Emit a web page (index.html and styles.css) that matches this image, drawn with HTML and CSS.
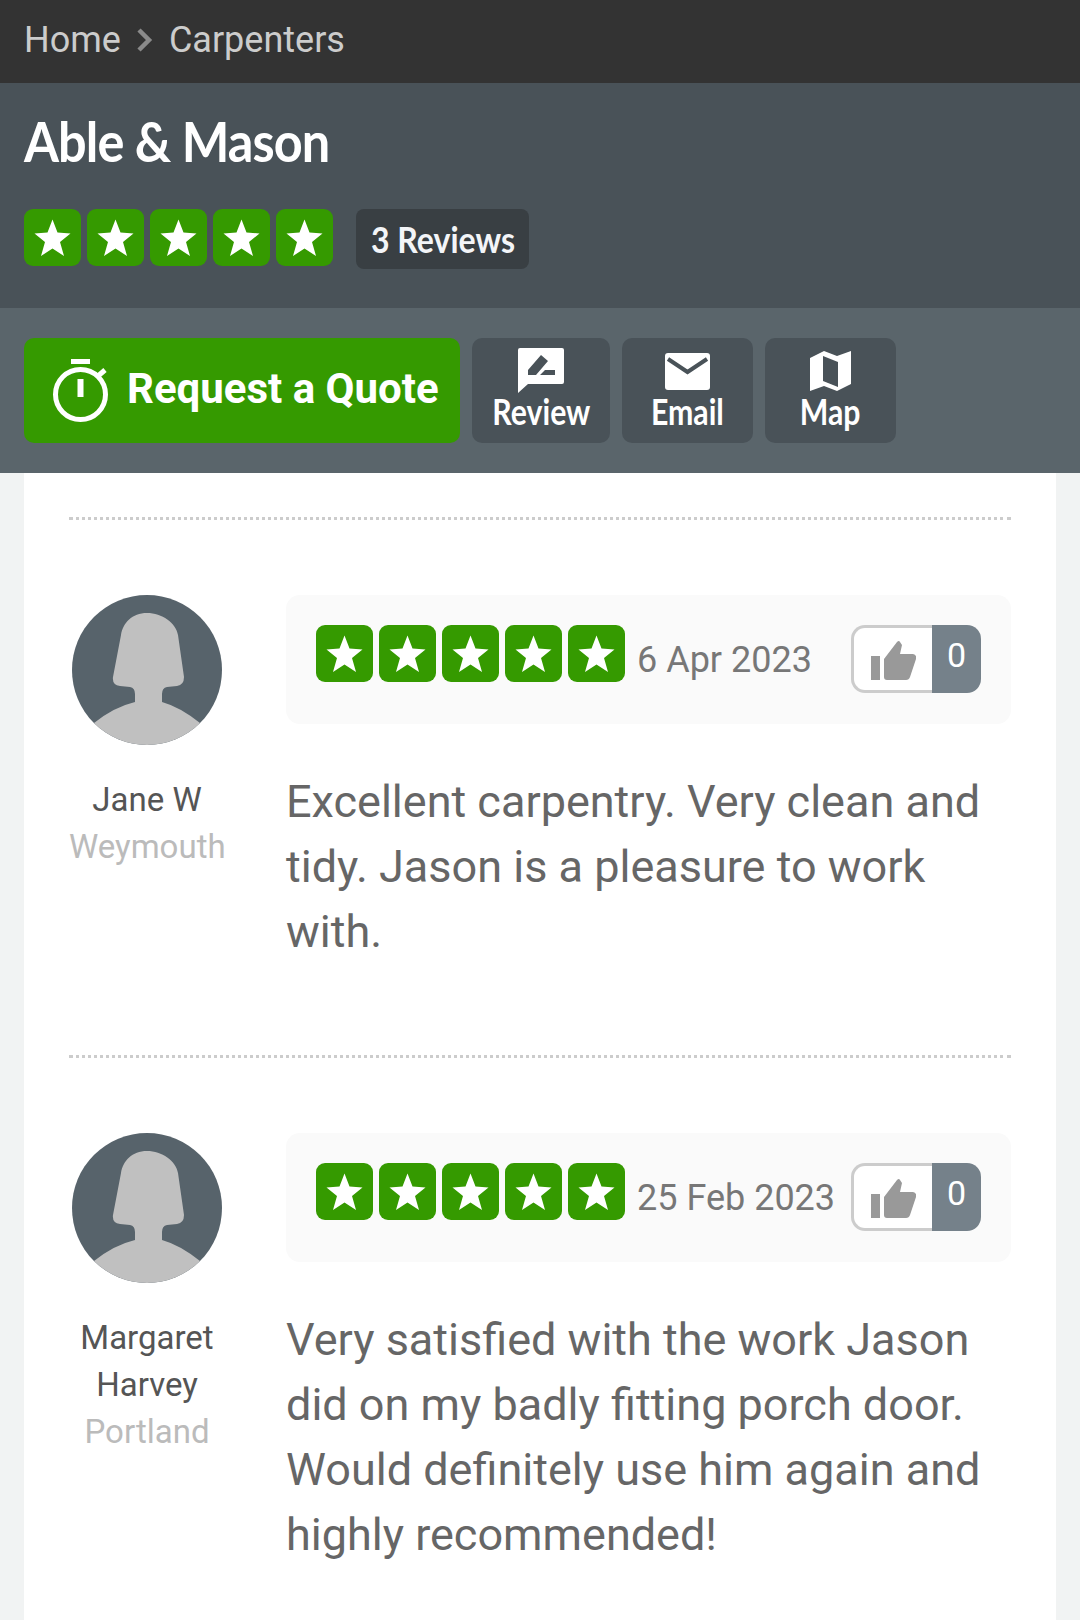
FILE: index.html
```html
<!DOCTYPE html>
<html lang="en">
<head>
  <meta charset="UTF-8">
  <meta name="viewport" content="width=device-width, initial-scale=1.0">
  <title>Able &amp; Mason - Carpenters</title>
  <link rel="stylesheet" href="styles.css">
</head>
<body>
  <svg class="defs" width="0" height="0">
    <symbol id="star" viewBox="0 0 57 57">
      <polygon points="28.5,10.5 33.5,23.5 46.5,24.5 36,33 40,47 28.5,39.5 17,47 21,33 10.5,24.5 23.5,23.5" fill="#fff"/>
    </symbol>
    <symbol id="thumb" viewBox="0 0 45 40">
      <rect x="0" y="16" width="9" height="24" fill="#999"/>
      <path d="M13 19 L26 2 Q28 0 29 2 L31 5 L29 14 L42 14 Q46 15 45 19 L39 37 Q38 40 35 40 L16 40 Q13 40 13 37 Z" fill="#999"/>
    </symbol>
    <symbol id="avatar" viewBox="0 0 150 150">
      <circle cx="75" cy="75" r="75" fill="#57636b"/>
      <path d="M75 18 C60 18 51 28 49 40 L41 82 Q40 90 48 91 L58 92 Q63 93 63 99 L63 107 Q42 112 22 128 A75 75 0 0 0 128 128 Q108 112 90 107 L90 99 Q90 93 95 92 L105 91 Q112 90 112 82 L106 40 C104 28 90 18 75 18 Z" fill="#c0c0c0"/>
    </symbol>
  </svg>

  <nav class="crumbs">
    <span>Home</span>
    <svg class="crumb-arrow" viewBox="0 0 16 24" width="16" height="24"><polyline points="2,2 12,12 2,22" fill="none" stroke="#8a8a8a" stroke-width="4.5"/></svg>
    <span>Carpenters</span>
  </nav>

  <header class="biz-head">
    <h1>Able &amp; Mason</h1>
    <div class="biz-rating">
      <div class="stars">
        <div class="star"><svg><use href="#star"/></svg></div>
        <div class="star"><svg><use href="#star"/></svg></div>
        <div class="star"><svg><use href="#star"/></svg></div>
        <div class="star"><svg><use href="#star"/></svg></div>
        <div class="star"><svg><use href="#star"/></svg></div>
      </div>
      <div class="review-count"><span>3 Reviews</span></div>
    </div>
  </header>

  <div class="actions">
    <a class="quote-btn">
      <svg viewBox="0 0 55 63" width="55" height="63">
        <rect x="18" y="0" width="19" height="5" fill="#fff"/>
        <circle cx="27.5" cy="35.5" r="25" fill="none" stroke="#fff" stroke-width="5"/>
        <rect x="24.5" y="20" width="6" height="18" fill="#fff"/>
        <line x1="45" y1="17" x2="52" y2="11" stroke="#fff" stroke-width="5"/>
      </svg>
      <span>Request a Quote</span>
    </a>
    <a class="act-btn act-review">
      <svg viewBox="0 0 46 45" width="46" height="45">
        <path fill-rule="evenodd" fill="#fff" d="M2 0 H44 Q46 0 46 2 V34 Q46 36 44 36 H10 L0 45 V2 Q0 0 2 0 Z M10 22 L23 7 L30 13 L18 27 H10 Z M22 27 L27 22 H37 V27 Z"/>
      </svg>
      <span>Review</span>
    </a>
    <a class="act-btn act-email">
      <svg viewBox="0 0 45 37" width="45" height="37">
        <rect width="45" height="37" rx="3" fill="#fff"/>
        <polyline points="3,6 22.5,19 42,6" fill="none" stroke="#495258" stroke-width="4"/>
      </svg>
      <span>Email</span>
    </a>
    <a class="act-btn act-map">
      <svg viewBox="0 0 41 40" width="41" height="40">
        <path fill-rule="evenodd" fill="#fff" d="M0 7 L14 0 L27 5 L41 0 V33 L27 40 L14 35 L0 40 Z M13 5 L28 11 V36 L13 30 Z"/>
      </svg>
      <span>Map</span>
    </a>
  </div>

  <main class="card">
    <article class="review">
      <div class="who">
        <svg class="avatar"><use href="#avatar"/></svg>
        <div class="who-name">Jane W</div>
        <div class="who-place">Weymouth</div>
      </div>
      <div class="body">
        <div class="meta">
          <div class="stars">
            <div class="star"><svg><use href="#star"/></svg></div>
            <div class="star"><svg><use href="#star"/></svg></div>
            <div class="star"><svg><use href="#star"/></svg></div>
            <div class="star"><svg><use href="#star"/></svg></div>
            <div class="star"><svg><use href="#star"/></svg></div>
          </div>
          <span class="date">6 Apr 2023</span>
          <div class="like">
            <div class="like-btn"><svg><use href="#thumb"/></svg></div>
            <div class="like-count">0</div>
          </div>
        </div>
        <p>Excellent carpentry. Very clean and tidy. Jason is a pleasure to work with.</p>
      </div>
    </article>

    <article class="review">
      <div class="who">
        <svg class="avatar"><use href="#avatar"/></svg>
        <div class="who-name">Margaret Harvey</div>
        <div class="who-place">Portland</div>
      </div>
      <div class="body">
        <div class="meta">
          <div class="stars">
            <div class="star"><svg><use href="#star"/></svg></div>
            <div class="star"><svg><use href="#star"/></svg></div>
            <div class="star"><svg><use href="#star"/></svg></div>
            <div class="star"><svg><use href="#star"/></svg></div>
            <div class="star"><svg><use href="#star"/></svg></div>
          </div>
          <span class="date">25 Feb 2023</span>
          <div class="like">
            <div class="like-btn"><svg><use href="#thumb"/></svg></div>
            <div class="like-count">0</div>
          </div>
        </div>
        <p>Very satisfied with the work Jason did on my badly fitting porch door. Would definitely use him again and highly recommended!</p>
      </div>
    </article>
  </main>
</body>
</html>
```

FILE: styles.css
```css
body {
  margin: 0;
  font-family: Roboto, Arial, sans-serif;
  background: #f1f3f3;
  display: flex;
  flex-direction: column;
  height: 1620px;
  overflow: hidden;
}
.defs {
  position: absolute;
}
.crumbs {
  height: 83px;
  flex: none;
  background: #333;
  color: #ccc;
  font-size: 36px;
  display: flex;
  align-items: center;
  gap: 16px;
  padding: 0 24px 4px 24px;
  box-sizing: border-box;
}
.biz-head {
  height: 225px;
  flex: none;
  background: #495258;
  padding: 28px 24px 0 24px;
  box-sizing: border-box;
}
.biz-head h1 {
  margin: 0;
  font-family: Lato, Arial, sans-serif;
  font-weight: 700;
  font-size: 56px;
  line-height: 60px;
  letter-spacing: -1px;
  color: #fff;
  transform: scaleX(0.9);
  transform-origin: left center;
}
.biz-rating {
  display: flex;
  align-items: flex-start;
  margin-top: 38px;
}
.stars {
  display: flex;
  gap: 6px;
}
.star {
  width: 57px;
  height: 57px;
  background: #359a00;
  border-radius: 9px;
}
.star svg {
  width: 57px;
  height: 57px;
  display: block;
}
.review-count {
  margin-left: 23px;
  width: 173px;
  height: 60px;
  line-height: 60px;
  text-align: center;
  background: #393f43;
  border-radius: 8px;
  color: #f3f5f8;
  font-family: Lato, Arial, sans-serif;
  font-size: 36px;
  font-weight: 700;
  white-space: nowrap;
}
.review-count span {
  display: inline-block;
  transform: scaleX(0.89);
}
.actions {
  height: 165px;
  flex: none;
  background: #5a656b;
  padding: 30px 24px;
  box-sizing: border-box;
  display: flex;
  gap: 12px;
}
.quote-btn {
  width: 436px;
  height: 105px;
  box-sizing: border-box;
  background: #359a00;
  border-radius: 10px;
  color: #fff;
  display: flex;
  align-items: center;
  gap: 19px;
  padding-left: 29px;
  font-size: 42px;
  font-weight: 700;
}
.quote-btn span {
  margin-bottom: 4px;
}
.act-btn {
  height: 105px;
  box-sizing: border-box;
  background: #495258;
  border-radius: 10px;
  color: #fff;
  display: flex;
  flex-direction: column;
  align-items: center;
  padding-top: 10px;
  font-family: Lato, Arial, sans-serif;
  font-size: 36px;
  font-weight: 700;
}
.act-btn span {
  line-height: 36px;
  transform: scaleX(0.84);
}
.act-review { width: 138px; }
.act-email { width: 131px; padding-top: 15px; }
.act-email svg { margin-bottom: 3px; }
.act-map { width: 131px; padding-top: 13px; }
.act-map svg { margin-bottom: 2px; }
.card {
  flex: 1;
  margin: 0 24px;
  padding: 0 45px;
  background: #fff;
}
.review {
  border-top: 3px dotted #ccc;
  margin-top: 44px;
  padding-top: 75px;
  display: flex;
  gap: 61px;
  height: 538px;
  box-sizing: border-box;
}
.review + .review {
  margin-top: 0;
}
.who {
  width: 156px;
  flex: none;
  text-align: center;
  font-size: 33px;
  line-height: 47px;
}
.avatar {
  width: 150px;
  height: 150px;
  display: block;
  margin: 0 auto 31px auto;
}
.who-name {
  color: #555;
}
.who-place {
  color: #bbb;
}
.body {
  flex: 1;
}
.meta {
  height: 129px;
  box-sizing: border-box;
  background: #fafafa;
  border-radius: 14px;
  padding: 30px;
  display: flex;
  align-items: flex-start;
}
.date {
  margin-left: 12px;
  margin-top: 13px;
  font-size: 36px;
  line-height: 44px;
  color: #777;
}
.like {
  margin-left: auto;
  display: flex;
  width: 130px;
  height: 68px;
}
.like-btn {
  width: 81px;
  box-sizing: border-box;
  border: 3px solid #ccc;
  border-right: none;
  border-radius: 14px 0 0 14px;
  background: #fff;
  padding: 12px 0 0 17px;
}
.like-btn svg {
  width: 45px;
  height: 40px;
  display: block;
}
.like-count {
  flex: 1;
  background: #75818a;
  border-radius: 0 14px 14px 0;
  color: #fff;
  font-size: 34px;
  line-height: 60px;
  text-align: center;
}
.body p {
  margin: 45px 0 0 0;
  font-size: 45px;
  line-height: 65px;
  color: #666;
}
```
